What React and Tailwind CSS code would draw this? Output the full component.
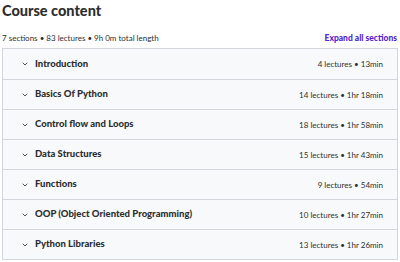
import { ChevronDown } from "lucide-react";

const sections = [
  { title: "Introduction", meta: "4 lectures • 13min" },
  { title: "Basics Of Python", meta: "14 lectures • 1hr 18min" },
  { title: "Control flow and Loops", meta: "18 lectures • 1hr 58min" },
  { title: "Data Structures", meta: "15 lectures • 1hr 43min" },
  { title: "Functions", meta: "9 lectures • 54min" },
  { title: "OOP (Object Oriented Programming)", meta: "10 lectures • 1hr 27min" },
  { title: "Python Libraries", meta: "13 lectures • 1hr 26min" },
];

export default function App() {
  return (
    <main className="w-[400px] h-[262px] bg-white px-[2px] text-[#2d2f31] font-['Lato','Noto_Sans',sans-serif] overflow-hidden">
      <h2 className="text-[14.5px] leading-[20px] font-black pt-[1px]">Course content</h2>
      <div className="flex items-center justify-between h-[16px] mt-[9px] mb-[2px]">
        <span className="text-[8px] text-[#2d2f31]">7 sections • 83 lectures • 9h 0m total length</span>
        <button className="text-[8.5px] font-black text-[#5624d0] pr-[1px]">Expand all sections</button>
      </div>
      <div className="border border-[#d1d7dc]">
        {sections.map((s, i) => (
          <div
            key={s.title}
            className={`flex items-center justify-between h-[30px] bg-[#f7f9fa] pl-[18px] pr-[14px] ${i > 0 ? "border-t border-[#d1d7dc]" : ""}`}
          >
            <div className="flex items-center gap-[6px]">
              <ChevronDown size={8} strokeWidth={2.5} className="text-[#2d2f31]" />
              <span className="text-[9.5px] font-black">{s.title}</span>
            </div>
            <span className="text-[8px] text-[#2d2f31]">{s.meta}</span>
          </div>
        ))}
      </div>
    </main>
  );
}
